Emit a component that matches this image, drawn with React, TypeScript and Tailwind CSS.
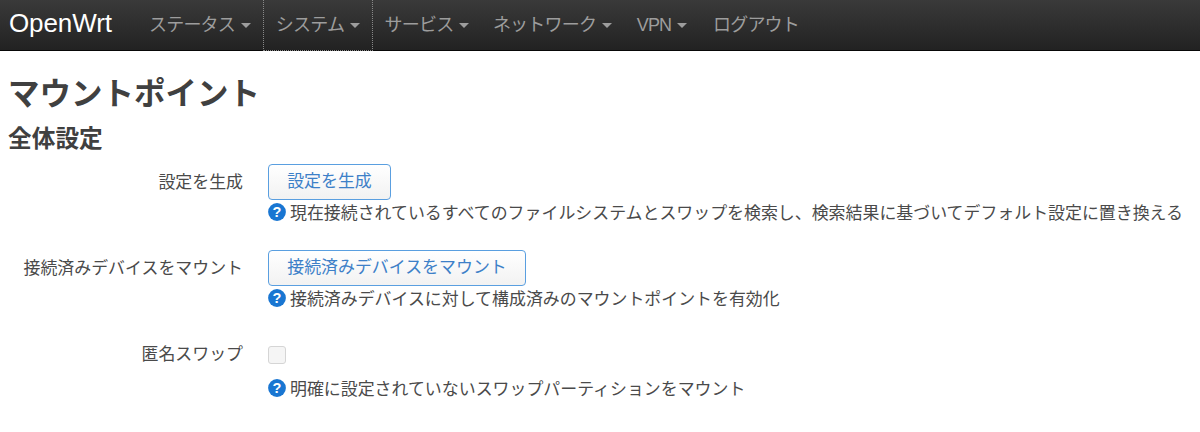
function Caret() {
  return <span className="ml-[6px] inline-block w-0 h-0 border-x-[5px] border-x-transparent border-t-[5px] border-t-[#9d9d9d] align-middle" />;
}
function Help() {
  return (
    <svg width="18" height="18" viewBox="0 0 18 18" className="shrink-0 mr-[4px] mb-[5px]">
      <circle cx="9" cy="9" r="8.9" fill="#1976d2" />
      <text x="9" y="14" textAnchor="middle" fontSize="14.5" fontWeight="700" fill="#fff" fontFamily="Liberation Sans, sans-serif">?</text>
    </svg>
  );
}
function NavItem({ label, caret = true, dotted = false, w }: { label: string; caret?: boolean; dotted?: boolean; w: string }) {
  return (
    <a className={`flex items-center justify-center h-[51px] text-[#9d9d9d] text-[18px] tracking-[-0.8px] ${w} ${dotted ? "border-x border-b border-dotted border-[#888]" : ""}`}>
      {label}
      {caret && <Caret />}
    </a>
  );
}
function Row({ label, help, children, h }: { label: string; help: string; children: React.ReactNode; h: string }) {
  return (
    <div className={`flex ${h}`}>
      <div className="w-[243px] text-right text-[16.93px] text-[#4a4a4a] pt-[8px] shrink-0 leading-[22px]">{label}</div>
      <div className="ml-[25px] flex flex-col">
        {children}
        <div className="flex items-center mt-[3px] h-[22px] text-[16.93px] text-[#4a4a4a] whitespace-nowrap"><Help />{help}</div>
      </div>
    </div>
  );
}
function Btn({ children, w }: { children: React.ReactNode; w: string }) {
  return <button className={`h-[36px] ${w} border border-[#5a9fe0] rounded-[4px] bg-gradient-to-b from-white to-[#f2f2f2] text-[#3d80c8] text-[16.93px] leading-none`}>{children}</button>;
}
export default function App() {
  return (
    <div className="w-[1200px] h-[432px] bg-white overflow-hidden font-['Liberation_Sans','Noto_Sans_CJK_JP',sans-serif]">
      <nav className="flex h-[51px] bg-gradient-to-b from-[#3a3a3a] to-[#222] border-b border-[#080808]">
        <span className="text-white text-[26px] pl-[9px] w-[137px] leading-[47px] tracking-[-0.1px]">OpenWrt</span>
        <NavItem label="ステータス" w="w-[126px]" />
        <NavItem label="システム" w="w-[110px]" dotted />
        <NavItem label="サービス" w="w-[108px]" />
        <NavItem label="ネットワーク" w="w-[143px]" />
        <NavItem label="VPN" w="w-[76px]" />
        <NavItem label="ログアウト" caret={false} w="w-[112px]" />
      </nav>
      <h1 className="text-[#404040] text-[31.5px] font-bold leading-[40px] mt-[23px] ml-[8px]">マウントポイント</h1>
      <h2 className="text-[#404040] text-[23.7px] font-bold leading-[28px] mt-[11px] ml-[8px]">全体設定</h2>
      <div className="mt-[11px]">
        <Row label="設定を生成" h="h-[86px]" help="現在接続されているすべてのファイルシステムとスワップを検索し、検索結果に基づいてデフォルト設定に置き換える">
          <Btn w="w-[123px]">設定を生成</Btn>
        </Row>
        <Row label="接続済みデバイスをマウント" h="h-[86px]" help="接続済みデバイスに対して構成済みのマウントポイントを有効化">
          <Btn w="w-[258px]">接続済みデバイスをマウント</Btn>
        </Row>
        <Row label="匿名スワップ" h="h-[86px]" help="明確に設定されていないスワップパーティションをマウント">
          <div className="h-[40px] pt-[10px]">
            <span className="block w-[18px] h-[18px] rounded-[3px] border border-[#d5d5d5] bg-[#f5f5f5]" />
          </div>
        </Row>
      </div>
    </div>
  );
}
